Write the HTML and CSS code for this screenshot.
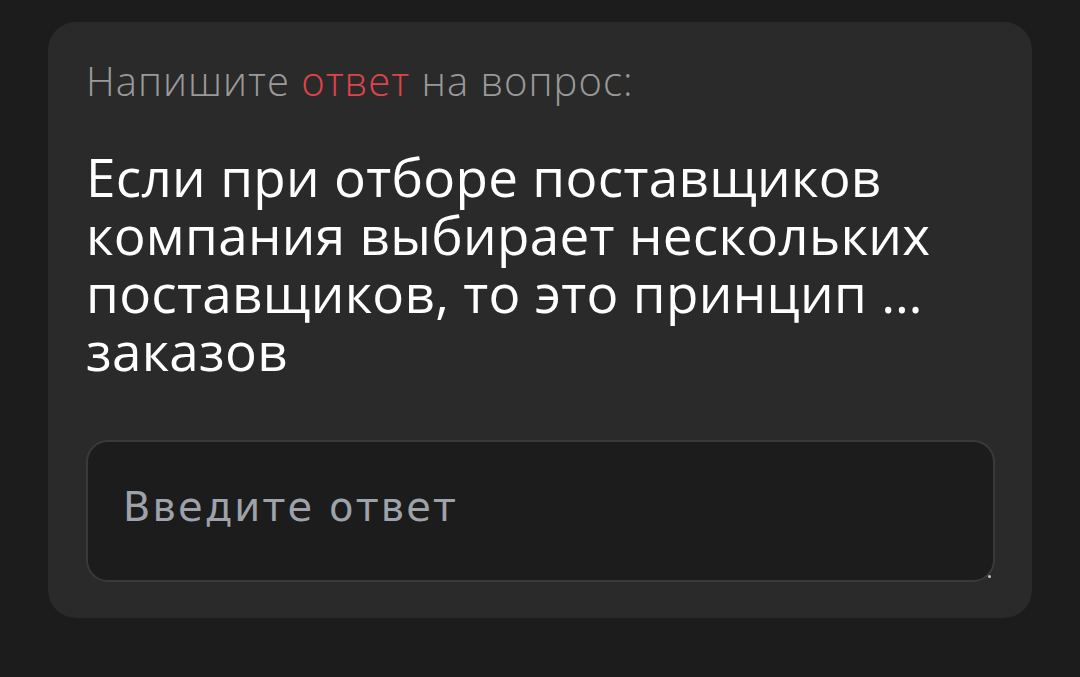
FILE: index.html
```html
<!DOCTYPE html>
<html lang="ru">
<head>
  <meta charset="UTF-8">
  <title>Вопрос</title>
  <link rel="stylesheet" href="styles.css">
</head>
<body>
  <div class="card">
    <p class="hint">Напишите <span class="accent">ответ</span> на вопрос:</p>
    <h2 class="question">Если при отборе поставщиков компания выбирает нескольких поставщиков, то это принцип … заказов</h2>
    <div class="answer-wrap">
      <textarea class="answer" placeholder="Введите ответ"></textarea>
      <span class="grip"></span>
    </div>
  </div>
</body>
</html>
```

FILE: styles.css
```css
body {
  margin: 0;
  padding: 22px 48px;
  background-color: #1c1c1c;
  font-family: "Open Sans", "Noto Sans", sans-serif;
}

.card {
  background: #2a2a2a;
  border-radius: 28px;
  padding: 36px 37px 36px 38px;
}

.hint {
  margin: 0;
  font-size: 40px;
  font-weight: 300;
  line-height: 46px;
  letter-spacing: 1px;
  color: #9a9a9a;
}

.accent {
  color: #e0434b;
}

.question {
  margin: 44px 0 0;
  font-size: 53px;
  font-weight: 400;
  line-height: 58px;
  letter-spacing: 0.3px;
  color: #ffffff;
}

.answer-wrap {
  position: relative;
  margin-top: 60px;
}

.answer {
  display: block;
  width: 100%;
  height: 142px;
  box-sizing: border-box;
  padding: 42px 35px 30px;
  background: #1c1c1c;
  border: 2px solid #3a3a3a;
  border-radius: 22px;
  font-family: "DejaVu Sans", Roboto, sans-serif;
  font-size: 40px;
  line-height: normal;
  letter-spacing: 2px;
  color: #ffffff;
  resize: none;
  outline: none;
}

.answer::placeholder {
  color: #9ea2aa;
}

.grip {
  position: absolute;
  right: 4px;
  bottom: 4px;
  width: 3px;
  height: 3px;
  border-radius: 50%;
  background: #c8c8c8;
}
```
